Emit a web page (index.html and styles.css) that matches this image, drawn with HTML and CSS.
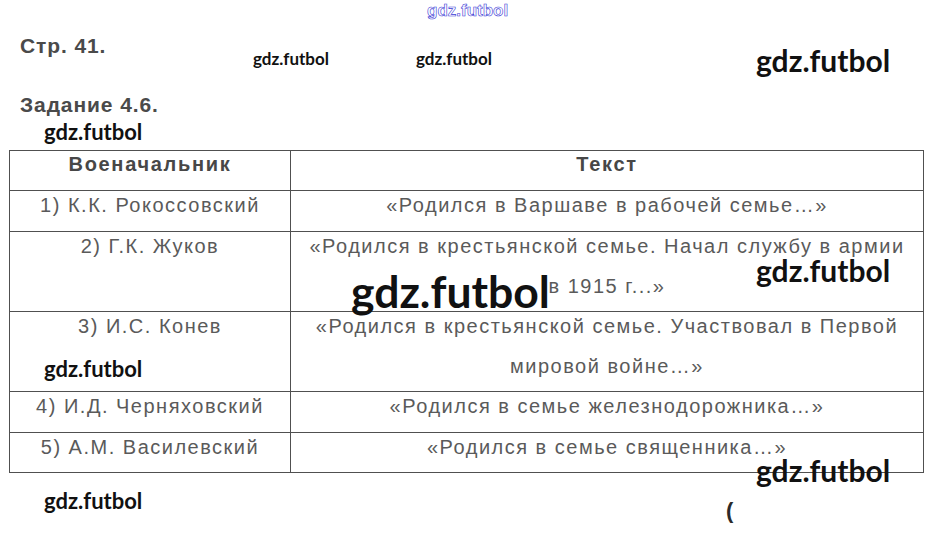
FILE: index.html
```html
<!DOCTYPE html>
<html lang="ru">
<head>
<meta charset="utf-8">
<title>Стр. 41. Задание 4.6.</title>
<link rel="stylesheet" href="styles.css">
</head>
<body>
<div class="page">
  <h2 class="heading first">Стр. 41.</h2>
  <h2 class="heading second">Задание 4.6.</h2>
  <table class="grid">
    <colgroup><col class="c1"><col class="c2"></colgroup>
    <tr class="r-head">
      <th><div class="t">Военачальник</div></th>
      <th><div class="t">Текст</div></th>
    </tr>
    <tr class="r1">
      <td><div class="t">1) К.К. Рокоссовский</div></td>
      <td><div class="t">«Родился в Варшаве в рабочей семье…»</div></td>
    </tr>
    <tr class="r2">
      <td><div class="t">2) Г.К. Жуков</div></td>
      <td><div class="t">«Родился в крестьянской семье. Начал службу в армии<br>в 1915 г...»</div></td>
    </tr>
    <tr class="r2">
      <td><div class="t">3) И.С. Конев</div></td>
      <td><div class="t">«Родился в крестьянской семье. Участвовал в Первой<br>мировой войне…»</div></td>
    </tr>
    <tr class="r1">
      <td><div class="t">4) И.Д. Черняховский</div></td>
      <td><div class="t">«Родился в семье железнодорожника…»</div></td>
    </tr>
    <tr class="r1 last">
      <td><div class="t">5) А.М. Василевский</div></td>
      <td><div class="t">«Родился в семье священника…»</div></td>
    </tr>
  </table>

  <span class="wm-outline">gdz.futbol</span>
  <span class="wm s17 w1">gdz.futbol</span>
  <span class="wm s17 w2">gdz.futbol</span>
  <span class="wm s30 w3">gdz.futbol</span>
  <span class="wm s22 w4">gdz.futbol</span>
  <span class="wm s44 w5">gdz.futbol</span>
  <span class="wm s30 w6">gdz.futbol</span>
  <span class="wm s22 w7">gdz.futbol</span>
  <span class="wm s30 w8">gdz.futbol</span>
  <span class="wm s22 w9">gdz.futbol</span>
  <span class="mark">(</span>
</div>
</body>
</html>
```
FILE: styles.css
```css
html, body {
  margin: 0;
  padding: 0;
  background: #ffffff;
}

.page {
  position: relative;
  width: 934px;
  height: 553px;
  overflow: hidden;
  padding: 34px 0 0 9px;
  box-sizing: border-box;
  font-family: "Liberation Sans", Arial, sans-serif;
}

.heading {
  margin: 0 0 0 11px;
  font-size: 21px;
  font-weight: bold;
  line-height: 24px;
  letter-spacing: 0.9px;
  color: #4a4a4a;
}

.heading.second {
  margin-top: 35px;
}

.grid {
  margin-top: 33px;
  border-collapse: collapse;
  table-layout: fixed;
  width: 915px;
}

.c1 { width: 281px; }

.grid th,
.grid td {
  border: 1px solid #505050;
  padding: 0;
  vertical-align: top;
  text-align: center;
  font-size: 20px;
  letter-spacing: 1.5px;
  color: #5a5a5a;
  font-weight: normal;
}

.grid th {
  font-weight: bold;
  color: #474747;
  letter-spacing: 1.7px;
  height: 39px;
}

.r1 td { height: 40px; }
.r1.last td { height: 39px; }
.r2 td { height: 79px; }

.t {
  line-height: 40px;
  margin-top: -6px;
}

.grid th .t {
  margin-top: -7px;
}

.wm {
  position: absolute;
  font-family: Lato, "Noto Sans", sans-serif;
  font-weight: bold;
  line-height: 1;
  color: #111111;
  white-space: nowrap;
}

.s17 { font-size: 17px; }
.s22 { font-size: 22px; }
.s30 { font-size: 30px; }
.s44 { font-size: 44.5px; }

.w1 { left: 253px; top: 50px; }
.w2 { left: 416px; top: 50px; }
.w3 { left: 756px; top: 45px; }
.w4 { left: 44px; top: 121px; }
.w5 { left: 351px; top: 269px; }
.w6 { left: 756px; top: 255px; }
.w7 { left: 44px; top: 358px; }
.w8 { left: 756px; top: 455px; }
.w9 { left: 44px; top: 490px; }

.wm-outline {
  position: absolute;
  left: 427px;
  top: 1px;
  font-family: "Liberation Sans", Arial, sans-serif;
  font-weight: bold;
  font-size: 17px;
  line-height: 20px;
  color: #ffffff;
  -webkit-text-stroke: 0.6px #3a3ad6;
  white-space: nowrap;
}

.mark {
  position: absolute;
  left: 726px;
  top: 498px;
  font-family: "Liberation Sans", Arial, sans-serif;
  font-weight: bold;
  font-size: 22px;
  line-height: 26px;
  color: #2a2a2a;
}
```
